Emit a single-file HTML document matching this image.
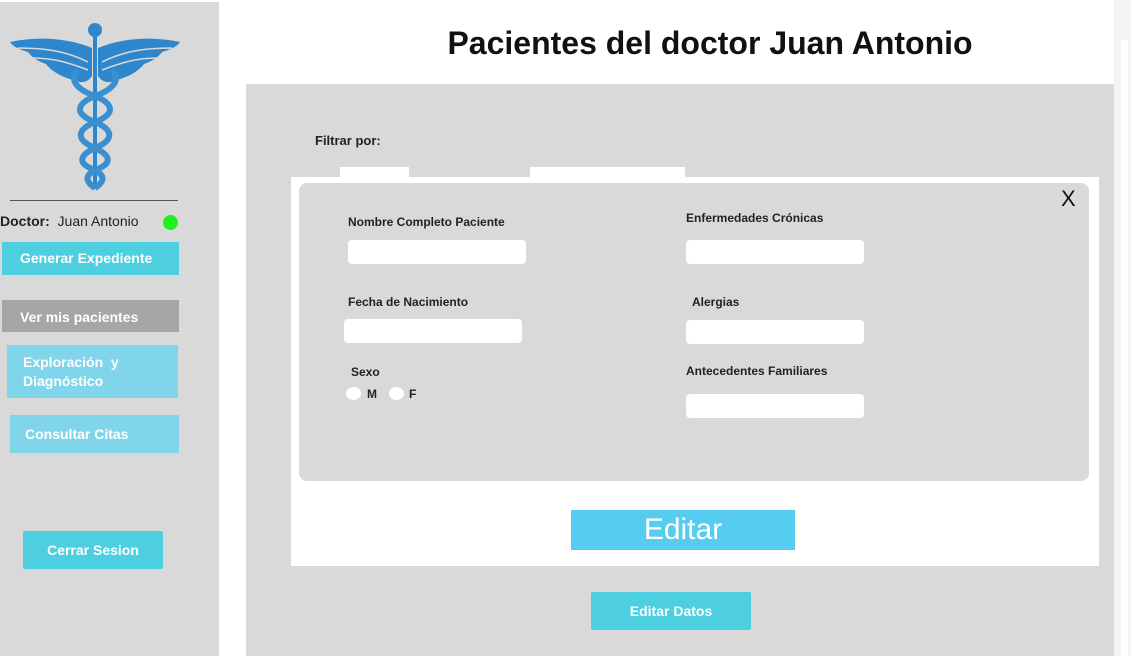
<!DOCTYPE html>
<html><head><meta charset="utf-8"><style>
*{margin:0;padding:0;box-sizing:border-box}
body{width:1131px;height:656px;overflow:hidden;background:#fff;font-family:"Liberation Sans",sans-serif;position:relative}
.a{position:absolute}
.lbl{position:absolute;font-size:12px;font-weight:bold;color:#222}
.inp{position:absolute;background:#fff;border-radius:4px;width:178px;height:24px}
.btn{position:absolute;color:#fff;font-weight:bold;font-size:14px}
</style></head><body>
<div class="a" style="left:0;top:2px;width:219px;height:654px;background:#d9d9d9"></div>
<div class="a" style="left:1114px;top:0;width:17px;height:656px;background:#f3f3f3"></div>
<div class="a" style="left:1121px;top:40px;width:7px;height:616px;background:#fff"></div>
<svg class="a" style="left:8px;top:18px" width="174" height="176" viewBox="0 0 174 176">
<g fill="#2e87cc">
<circle cx="87" cy="12" r="7"/>
<rect x="85" y="16" width="4" height="155"/>
<path d="M84 30 C60 20 30 18 2 24 C6 30 14 32 20 34 C24 40 32 44 38 46 C44 54 56 60 66 62 C74 66 80 64 84 58Z"/>
<path d="M90 30 C114 20 144 18 172 24 C168 30 160 32 154 34 C150 40 142 44 136 46 C130 54 118 60 108 62 C100 66 94 64 90 58Z"/>
</g>
<g fill="none" stroke="#d9d9d9" stroke-width="1.5">
<path d="M10 30 C40 30 60 34 80 44"/><path d="M24 40 C48 40 64 46 80 52"/>
<path d="M164 30 C134 30 114 34 94 44"/><path d="M150 40 C126 40 110 46 94 52"/>
</g>
<g fill="none" stroke="#3a8fd0" stroke-width="6">
<path d="M70 52 C60 62 70 72 87 78 C106 86 108 96 87 104 C68 112 68 122 87 130 C104 138 104 146 87 152 C76 158 78 164 87 170"/>
<path d="M104 52 C114 62 104 72 87 78 C68 86 66 96 87 104 C106 112 106 122 87 130 C70 138 70 146 87 152 C98 158 96 164 87 170"/>
</g>
</svg>
<div class="a" style="left:10px;top:200px;width:168px;height:1px;background:#555"></div>
<div class="a" style="left:0;top:213px;font-size:14px;color:#222;white-space:nowrap"><b>Doctor:</b>&nbsp; Juan Antonio</div>
<div class="a" style="left:163px;top:215px;width:15px;height:15px;border-radius:50%;background:#22ee22"></div>
<div class="btn" style="left:2px;top:242px;width:177px;height:33px;background:#4dcfe0;line-height:33px;padding-left:18px">Generar Expediente</div>
<div class="btn" style="left:2px;top:300px;width:177px;height:32px;background:#a6a6a6;line-height:34px;padding-left:18px">Ver mis pacientes</div>
<div class="btn" style="left:7px;top:345px;width:171px;height:53px;background:#80d5ea;padding:8px 0 0 16px;line-height:19px">Exploración &nbsp;y<br>Diagnóstico</div>
<div class="btn" style="left:10px;top:415px;width:169px;height:38px;background:#80d5ea;line-height:38px;padding-left:15px">Consultar Citas</div>
<div class="btn" style="left:23px;top:531px;width:140px;height:38px;background:#4dcfe0;border-radius:2px;line-height:38px;text-align:center">Cerrar Sesion</div>

<div class="a" style="left:310px;top:25px;width:800px;text-align:center;font-size:32px;font-weight:bold;color:#111">Pacientes del doctor Juan Antonio</div>
<div class="a" style="left:246px;top:84px;width:868px;height:572px;background:#d9d9d9"></div>
<div class="lbl" style="left:315px;top:133px;font-size:13px">Filtrar por:</div>
<div class="a" style="left:340px;top:167px;width:69px;height:12px;background:#fff"></div>
<div class="a" style="left:530px;top:167px;width:155px;height:12px;background:#fff"></div>
<div class="a" style="left:291px;top:177px;width:808px;height:389px;background:#fff"></div>
<div class="a" style="left:299px;top:183px;width:790px;height:298px;background:#d9d9d9;border-radius:8px"></div>
<div class="a" style="left:1061px;top:186px;font-size:22px;color:#111">X</div>
<div class="lbl" style="left:348px;top:215px">Nombre Completo Paciente</div>
<div class="inp" style="left:348px;top:240px"></div>
<div class="lbl" style="left:686px;top:211px">Enfermedades Crónicas</div>
<div class="inp" style="left:686px;top:240px"></div>
<div class="lbl" style="left:348px;top:295px">Fecha de Nacimiento</div>
<div class="inp" style="left:344px;top:319px"></div>
<div class="lbl" style="left:692px;top:295px">Alergias</div>
<div class="inp" style="left:686px;top:320px"></div>
<div class="lbl" style="left:351px;top:365px">Sexo</div>
<div class="a" style="left:346px;top:387px;width:15px;height:13px;border-radius:50%;background:#fff"></div>
<div class="lbl" style="left:367px;top:387px">M</div>
<div class="a" style="left:389px;top:387px;width:15px;height:13px;border-radius:50%;background:#fff"></div>
<div class="lbl" style="left:409px;top:387px">F</div>
<div class="lbl" style="left:686px;top:364px">Antecedentes Familiares</div>
<div class="inp" style="left:686px;top:394px"></div>
<div class="a" style="left:571px;top:510px;width:224px;height:40px;background:#55ccf0;color:#fff;font-size:30px;text-align:center;line-height:40px">Editar</div>
<div class="btn" style="left:591px;top:592px;width:160px;height:38px;background:#4dcfe0;border-radius:2px;line-height:38px;text-align:center">Editar Datos</div>
</body></html>
